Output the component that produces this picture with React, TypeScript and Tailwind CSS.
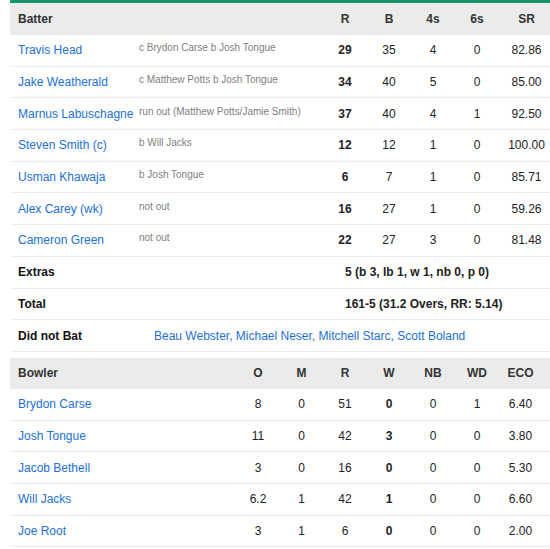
import React from "react";

const batters = [
  { name: "Travis Head", out: "c Brydon Carse b Josh Tongue", r: 29, b: 35, f: 4, s: 0, sr: "82.86" },
  { name: "Jake Weatherald", out: "c Matthew Potts b Josh Tongue", r: 34, b: 40, f: 5, s: 0, sr: "85.00" },
  { name: "Marnus Labuschagne", out: "run out (Matthew Potts/Jamie Smith)", r: 37, b: 40, f: 4, s: 1, sr: "92.50" },
  { name: "Steven Smith (c)", out: "b Will Jacks", r: 12, b: 12, f: 1, s: 0, sr: "100.00" },
  { name: "Usman Khawaja", out: "b Josh Tongue", r: 6, b: 7, f: 1, s: 0, sr: "85.71" },
  { name: "Alex Carey (wk)", out: "not out", r: 16, b: 27, f: 1, s: 0, sr: "59.26" },
  { name: "Cameron Green", out: "not out", r: 22, b: 27, f: 3, s: 0, sr: "81.48" },
];

const bowlers = [
  { name: "Brydon Carse", o: "8", m: 0, r: 51, w: 0, nb: 0, wd: 1, eco: "6.40" },
  { name: "Josh Tongue", o: "11", m: 0, r: 42, w: 3, nb: 0, wd: 0, eco: "3.80" },
  { name: "Jacob Bethell", o: "3", m: 0, r: 16, w: 0, nb: 0, wd: 0, eco: "5.30" },
  { name: "Will Jacks", o: "6.2", m: 1, r: 42, w: 1, nb: 0, wd: 0, eco: "6.60" },
  { name: "Joe Root", o: "3", m: 1, r: 6, w: 0, nb: 0, wd: 0, eco: "2.00" },
];

const batCols = "grid grid-cols-[129px_184px_44px_44px_44px_44px_51px]";
const bowlCols = "grid grid-cols-[226px_44px_43px_44px_44px_44px_44px_51px]";
const row = "h-[31.7px] items-center border-b border-[#ececec]";

export default function App() {
  return (
    <div className="bg-white w-[550px] h-[549px] overflow-hidden pl-[10px] text-[12px] text-[#222] font-['Liberation_Sans',Arial,sans-serif]">
      <div className="border-t-[3px] border-[#16956a]">
        <div className={`${batCols} h-[32px] items-center bg-[#ebebeb] font-bold text-[#333]`}>
          <span className="pl-2">Batter</span>
          <span />
          <span className="text-center">R</span>
          <span className="text-center">B</span>
          <span className="text-center">4s</span>
          <span className="text-center">6s</span>
          <span className="text-center pl-1">SR</span>
        </div>
        {batters.map((p) => (
          <div key={p.name} className={`${batCols} ${row}`}>
            <span className="pl-2 text-[#2170d9] whitespace-nowrap">{p.name}</span>
            <span className="text-[10px] text-[#808080] whitespace-nowrap pb-[5px]">{p.out}</span>
            <span className="text-center font-bold">{p.r}</span>
            <span className="text-center">{p.b}</span>
            <span className="text-center">{p.f}</span>
            <span className="text-center">{p.s}</span>
            <span className="text-center pl-1">{p.sr}</span>
          </div>
        ))}
        <div className={`${batCols} ${row}`}>
          <span className="pl-2 font-bold text-[#111]">Extras</span>
          <span />
          <span className="col-span-5 pl-[22px] font-bold whitespace-nowrap">5 (b 3, lb 1, w 1, nb 0, p 0)</span>
        </div>
        <div className={`${batCols} ${row}`}>
          <span className="pl-2 font-bold text-[#111]">Total</span>
          <span />
          <span className="col-span-5 pl-[22px] font-bold whitespace-nowrap">161-5 (31.2 Overs, RR: 5.14)</span>
        </div>
        <div className={`flex ${row}`}>
          <span className="pl-2 w-[144px] font-bold text-[#111]">Did not Bat</span>
          <span className="text-[#2170d9] whitespace-nowrap">Beau Webster, Michael Neser, Mitchell Starc, Scott Boland</span>
        </div>
      </div>

      <div className="mt-[6px]">
        <div className={`${bowlCols} h-[31px] items-center bg-[#ebebeb] font-bold text-[#333]`}>
          <span className="pl-2">Bowler</span>
          <span className="text-center">O</span>
          <span className="text-center">M</span>
          <span className="text-center">R</span>
          <span className="text-center">W</span>
          <span className="text-center">NB</span>
          <span className="text-center">WD</span>
          <span className="text-center pr-2">ECO</span>
        </div>
        {bowlers.map((b) => (
          <div key={b.name} className={`${bowlCols} ${row}`}>
            <span className="pl-2 text-[#2170d9] whitespace-nowrap">{b.name}</span>
            <span className="text-center">{b.o}</span>
            <span className="text-center">{b.m}</span>
            <span className="text-center">{b.r}</span>
            <span className="text-center font-bold">{b.w}</span>
            <span className="text-center">{b.nb}</span>
            <span className="text-center">{b.wd}</span>
            <span className="text-center pr-2">{b.eco}</span>
          </div>
        ))}
      </div>
    </div>
  );
}
